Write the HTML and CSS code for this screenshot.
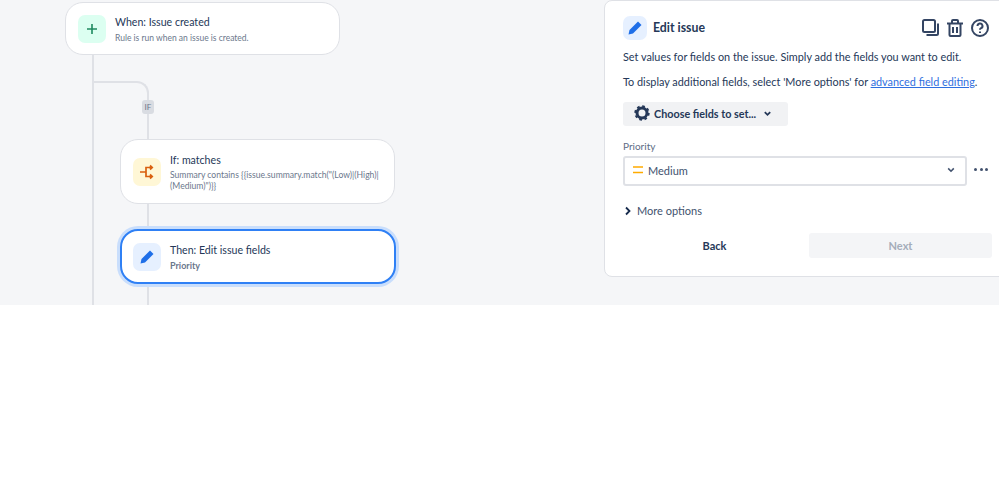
FILE: index.html
```html
<!DOCTYPE html>
<html lang="en">
<head>
<meta charset="utf-8">
<title>Edit issue</title>
<link rel="stylesheet" href="styles.css">
</head>
<body>
<div class="canvas">
  <div class="line trunk"></div>
  <div class="line branch-curve"></div>
  <div class="line stem-a"></div>
  <div class="line stem-b"></div>
  <div class="if-badge">IF</div>

  <div class="node node-when">
    <div class="tile tile-green">
      <svg width="16" height="16" viewBox="0 0 16 16"><path d="M8 3v10M3 8h10" stroke="#1f8a5f" stroke-width="1.600" fill="none"/></svg>
    </div>
    <div class="node-text">
      <div class="node-title">When: Issue created</div>
      <div class="node-sub">Rule is run when an issue is created.</div>
    </div>
  </div>

  <div class="node node-if">
    <div class="tile tile-yellow">
      <svg width="18" height="18" viewBox="0 0 18 18"><path d="M2 9h6M8 9V4.500h6M8 9v4.500h6M12 2.500 14.200 4.500 12 6.500M12 11.500 14.200 13.500 12 15.500" stroke="#d9600f" stroke-width="1.700" fill="none"/></svg>
    </div>
    <div class="node-text">
      <div class="node-title">If: matches</div>
      <div class="node-sub">Summary contains {{issue.summary.match("(Low)|(High)|<br>(Medium)")}}</div>
    </div>
  </div>

  <div class="node node-then">
    <div class="tile tile-blue">
      <svg width="16" height="16" viewBox="0 0 16 16"><path d="M11 1.500 14.500 5 6 13.500 1.500 14.500 2.500 10Z" fill="#1f6fe8"/></svg>
    </div>
    <div class="node-text">
      <div class="node-title">Then: Edit issue fields</div>
      <div class="node-sub node-sub-bold">Priority</div>
    </div>
  </div>

  <section class="panel">
    <header class="panel-head">
      <div class="tile tile-blue tile-head">
        <svg width="16" height="16" viewBox="0 0 16 16"><path d="M11 1.500 14.500 5 6 13.500 1.500 14.500 2.500 10Z" fill="#1f6fe8"/></svg>
      </div>
      <h2 class="panel-title">Edit issue</h2>
      <div class="head-icons">
        <svg width="17" height="17" viewBox="0 0 17 17" fill="none" stroke="#344563" stroke-width="2"><rect x="1" y="1" width="12" height="12" rx="1.500"/><path d="M16 4.500v10a1.500 1.500 0 0 1-1.500 1.500H4.500"/></svg>
        <svg width="16" height="18" viewBox="0 0 16 18" fill="none" stroke="#344563" stroke-width="2"><path d="M0 4.500h16M5 4V2a1 1 0 0 1 1-1h4a1 1 0 0 1 1 1v2M2.500 5v11a1 1 0 0 0 1 1h9a1 1 0 0 0 1-1V5M6 8v6M10 8v6"/></svg>
        <svg width="18" height="18" viewBox="0 0 18 18" fill="none" stroke="#344563" stroke-width="2"><circle cx="9" cy="9" r="8"/><path d="M6.500 7a2.500 2.500 0 1 1 3.600 2.200c-.8.400-1.100.9-1.100 1.600"/><path d="M9 12.500v1.500"/></svg>
      </div>
    </header>
    <p class="copy">Set values for fields on the issue. Simply add the fields you want to edit.</p>
    <p class="copy">To display additional fields, select 'More options' for <a class="link" href="#">advanced field editing</a>.</p>
    <button class="choose" type="button">
      <svg width="16" height="16" viewBox="0 0 16 16" fill="none" stroke="#253858"><circle cx="8" cy="8" r="5" stroke-width="3"/><circle cx="8" cy="8" r="6.800" stroke-width="1.800" stroke-dasharray="2.700 2.640"/></svg>
      <span>Choose fields to set...</span>
      <svg class="chev" width="9" height="9" viewBox="0 0 10 10" fill="none" stroke="#253858" stroke-width="2"><path d="M2 3.500 5 6.500 8 3.500"/></svg>
    </button>
    <label class="field-label">Priority</label>
    <div class="field-row">
      <div class="select">
        <svg width="10" height="8" viewBox="0 0 10 8"><path d="M0 1h10M0 6.500h10" stroke="#ffab00" stroke-width="1.600"/></svg>
        <span class="select-value">Medium</span>
        <svg class="select-chev" width="8" height="8" viewBox="0 0 10 10" fill="none" stroke="#42526e" stroke-width="2"><path d="M1.500 3 5 6.500 8.500 3"/></svg>
      </div>
      <div class="dots"><i></i><i></i><i></i></div>
    </div>
    <div class="more">
      <svg width="8" height="10" viewBox="0 0 8 10" fill="none" stroke="#172b4d" stroke-width="1.800"><path d="M2 1.500 5.500 5 2 8.500"/></svg>
      <span>More options</span>
    </div>
    <div class="actions">
      <button class="btn btn-back" type="button">Back</button>
      <button class="btn btn-next" type="button">Next</button>
    </div>
  </section>
</div>
</body>
</html>
```
FILE: styles.css
```css
* { box-sizing: border-box; }
html, body { margin: 0; padding: 0; background: #fff; }
body { font-family: Lato, "Noto Sans", sans-serif; color: #253858; overflow: hidden; height: 496px; }
.canvas { position: relative; width: 999px; height: 305px; background: #f5f6f8; overflow: hidden; }
.line { position: absolute; background: #dfe1e6; }
.trunk { left: 92px; top: 50px; width: 2px; height: 255px; }
.branch-curve { left: 93px; top: 81px; width: 56px; height: 60px; background: none; border-top: 2px solid #dfe1e6; border-right: 2px solid #dfe1e6; border-top-right-radius: 12px; }
.stem-a { left: 147px; top: 200px; width: 2px; height: 32px; }
.stem-b { left: 147px; top: 282px; width: 2px; height: 23px; }
.if-badge { position: absolute; left: 142px; top: 100px; width: 12px; height: 14px; border-radius: 3px; background: #d9dce2; color: #6b778c; font-size: 8px; line-height: 14px; text-align: center; }
.node { position: absolute; display: flex; align-items: center; background: #fff; border: 1px solid #dfe1e6; border-radius: 18px; }
.node-when { left: 65px; top: 2px; width: 275px; height: 53px; padding-left: 12px; }
.node-if { left: 120px; top: 139px; width: 275px; height: 65px; padding-left: 12px; }
.node-then { left: 120px; top: 229px; width: 276px; height: 55px; padding-left: 12px; border: 2px solid #2f80f5; box-shadow: 0 0 0 3px #c9defc; }
.tile { flex: none; width: 28px; height: 28px; border-radius: 7px; display: flex; align-items: center; justify-content: center; }
.node-then .tile { margin-left: -1px; }
.tile-green { background: #dcfff1; }
.tile-yellow { background: #fff7d6; }
.tile-blue { background: #e6f0ff; }
.node-text { margin-left: 9px; min-width: 0; padding-top: 2px; }
.node-title { font-size: 10.600px; line-height: 15px; color: #253858; white-space: nowrap; }
.node-sub { font-size: 8.500px; line-height: 11.500px; color: #6b778c; margin-top: 2px; white-space: nowrap; }
.node-when .node-sub { margin-top: 3px; }
.node-if .node-sub { font-size: 8.600px; }
.node-sub-bold { font-weight: 700; font-size: 9px; margin-top: 2px; }
.panel { position: absolute; left: 604px; top: 0; width: 420px; height: 277px; background: #fff; border: 1px solid #dfe1e6; border-radius: 8px; padding: 14px 0 0 18px; }
.panel-head { display: flex; align-items: center; width: 366px; height: 25px; }
.tile-head { width: 24px; height: 24px; }
.panel-title { margin: 0 0 0 6px; font-size: 12.300px; font-weight: 700; color: #253858; }
.head-icons { margin-left: auto; display: flex; align-items: center; gap: 8px; }
.copy { margin: 0; font-size: 10.850px; line-height: 14px; color: #253858; white-space: nowrap; }
.panel-head + .copy { margin-top: 10px; }
.copy + .copy { margin-top: 11px; }
.link { color: #2f6fe0; text-decoration: underline; }
.choose { display: flex; align-items: center; gap: 4px; margin-top: 13px; width: 165px; height: 24px; border: 0; border-radius: 3px; background: #f1f2f4; padding: 0 0 2px 11px; font: 700 10.800px Lato, sans-serif; color: #253858; }
.chev { margin-left: 3px; }
.field-label { display: block; margin-top: 14px; font-size: 10px; line-height: 13px; color: #5e6c84; }
.field-row { display: flex; align-items: center; margin-top: 3px; }
.select { display: flex; align-items: center; width: 344px; height: 30px; border: 2px solid #dfe1e6; border-radius: 3px; padding: 0 10px 2px 8px; background: #fff; }
.select-value { margin-left: 5px; font-size: 11px; color: #42526e; }
.select-chev { margin-left: auto; }
.dots { display: flex; gap: 2.500px; margin-left: 7px; margin-top: -4px; }
.dots i { display: block; width: 3px; height: 3px; border-radius: 50%; background: #42526e; }
.more { display: flex; align-items: center; gap: 5px; margin: 18px 0 0 1px; font-size: 11px; line-height: 14px; color: #42526e; }
.actions { display: flex; margin-top: 15px; gap: 1px; }
.btn { width: 183px; height: 25px; border: 0; border-radius: 3px; font: 700 11px Lato, sans-serif; background: none; color: #253858; padding: 0; }
.btn-back { margin-right: 2px; }
.btn-next { width: 183px; background: #f4f5f7; color: #a5adba; }
```
